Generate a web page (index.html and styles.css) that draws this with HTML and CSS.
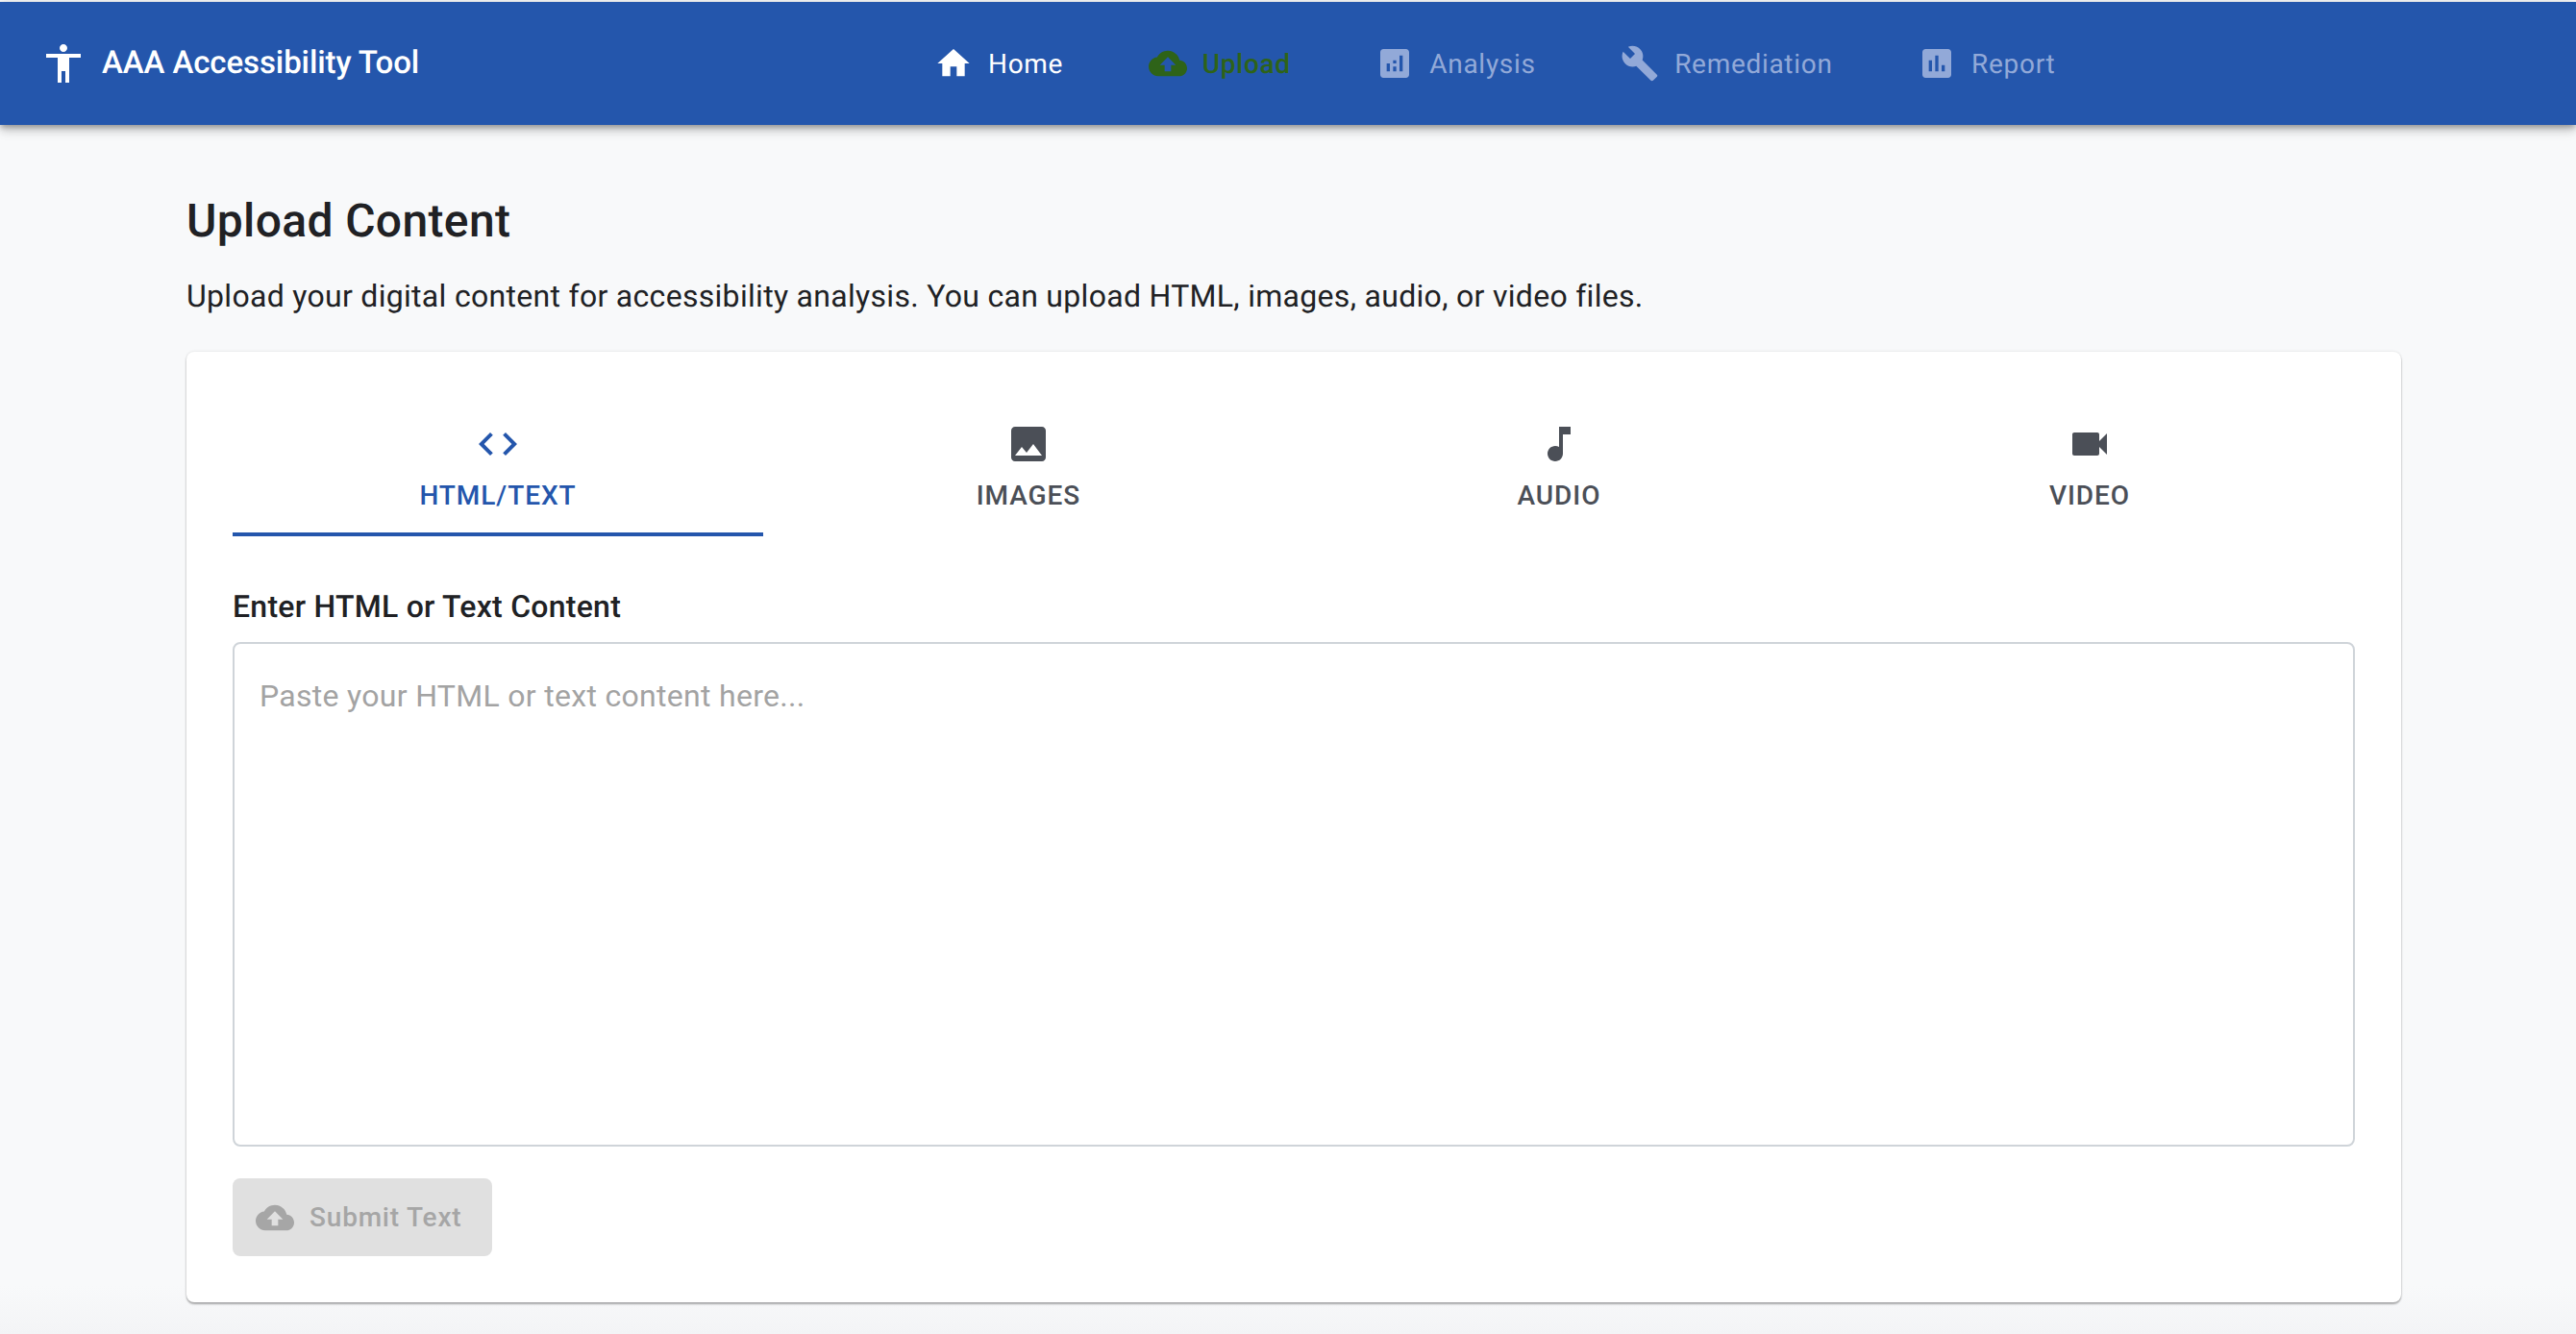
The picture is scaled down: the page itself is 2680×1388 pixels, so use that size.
FILE: index.html
```html
<!DOCTYPE html>
<html lang="en">
<head>
<meta charset="utf-8">
<title>AAA Accessibility Tool</title>
<link rel="stylesheet" href="styles.css">
</head>
<body>
<header class="appbar">
  <div class="brand">
    <svg class="icon-lg" viewBox="0 0 24 24"><path d="M12 2c1.1 0 2 .9 2 2s-.9 2-2 2-2-.9-2-2 .9-2 2-2zm9 7h-6v13h-2v-6h-2v6H9V9H3V7h18v2z"/></svg>
    <span class="brand-name">AAA Accessibility Tool</span>
  </div>
  <nav class="nav">
    <a class="nav-item nav-home"><svg class="icon" viewBox="0 0 24 24"><path d="M10 20v-6h4v6h5v-8h3L12 3 2 12h3v8z"/></svg><span>Home</span></a>
    <a class="nav-item nav-active"><svg class="icon" viewBox="0 0 24 24"><path d="M19.35 10.04C18.67 6.59 15.64 4 12 4 9.11 4 6.6 5.64 5.35 8.04 2.34 8.36 0 10.91 0 14c0 3.31 2.69 6 6 6h13c2.76 0 5-2.24 5-5 0-2.64-2.05-4.78-4.65-4.96zM14 13v4h-4v-4H7l5-5 5 5h-3z"/></svg><span>Upload</span></a>
    <a class="nav-item nav-dim"><svg class="icon" viewBox="0 0 24 24"><path d="M19 3H5c-1.1 0-2 .9-2 2v14c0 1.1.9 2 2 2h14c1.1 0 2-.9 2-2V5c0-1.1-.9-2-2-2zM9 17H7v-5h2v5zm4 0h-2v-3h2v3zm0-5h-2v-2h2v2zm4 5h-2V7h2v10z"/></svg><span>Analysis</span></a>
    <a class="nav-item nav-dim"><svg class="icon" viewBox="0 0 24 24"><path d="M22.7 19l-9.1-9.1c.9-2.3.4-5-1.5-6.9-2-2-5-2.4-7.4-1.3L9 6 6 9 1.6 4.7C.4 7.1.9 10.1 2.9 12.1c1.9 1.9 4.6 2.4 6.9 1.5l9.1 9.1c.4.4 1 .4 1.4 0l2.3-2.3c.5-.4.5-1.1.1-1.4z"/></svg><span>Remediation</span></a>
    <a class="nav-item nav-dim"><svg class="icon" viewBox="0 0 24 24"><path d="M19 3H5c-1.1 0-2 .9-2 2v14c0 1.1.9 2 2 2h14c1.1 0 2-.9 2-2V5c0-1.1-.9-2-2-2zM9 17H7v-7h2v7zm4 0h-2V7h2v10zm4 0h-2v-4h2v4z"/></svg><span>Report</span></a>
  </nav>
</header>
<main class="page">
  <h1 class="title">Upload Content</h1>
  <p class="intro">Upload your digital content for accessibility analysis. You can upload HTML, images, audio, or video files.</p>
  <section class="card">
    <div class="tabs">
      <button class="tab tab-active"><svg class="icon-lg" viewBox="0 0 24 24"><path d="M9.4 16.6L4.8 12l4.6-4.6L8 6l-6 6 6 6 1.4-1.4zm5.2 0l4.6-4.6-4.6-4.6L16 6l6 6-6 6-1.4-1.4z"/></svg><span>HTML/TEXT</span></button>
      <button class="tab"><svg class="icon-lg" viewBox="0 0 24 24"><path d="M21 19V5c0-1.1-.9-2-2-2H5c-1.1 0-2 .9-2 2v14c0 1.1.9 2 2 2h14c1.1 0 2-.9 2-2zM8.5 13.5l2.5 3.01L14.5 12l4.5 6H5l3.5-4.5z"/></svg><span>IMAGES</span></button>
      <button class="tab"><svg class="icon-lg" viewBox="0 0 24 24"><path d="M12 3v10.55c-.59-.34-1.27-.55-2-.55-2.21 0-4 1.79-4 4s1.79 4 4 4 4-1.79 4-4V7h4V3h-6z"/></svg><span>AUDIO</span></button>
      <button class="tab"><svg class="icon-lg" viewBox="0 0 24 24"><path d="M17 10.5V7c0-.55-.45-1-1-1H4c-.55 0-1 .45-1 1v10c0 .55.45 1 1 1h12c.55 0 1-.45 1-1v-3.5l4 4v-11l-4 4z"/></svg><span>VIDEO</span></button>
    </div>
    <label class="field-label" for="content">Enter HTML or Text Content</label>
    <textarea class="field" id="content" placeholder="Paste your HTML or text content here..."></textarea>
    <button class="submit" disabled><svg class="icon" viewBox="0 0 24 24"><path d="M19.35 10.04C18.67 6.59 15.64 4 12 4 9.11 4 6.6 5.64 5.35 8.04 2.34 8.36 0 10.91 0 14c0 3.31 2.69 6 6 6h13c2.76 0 5-2.24 5-5 0-2.64-2.05-4.78-4.65-4.96zM14 13v4h-4v-4H7l5-5 5 5h-3z"/></svg><span>Submit Text</span></button>
  </section>
</main>
</body>
</html>
```
FILE: styles.css
```css
* { box-sizing: border-box; }
html, body { height: 100%; }
body {
  margin: 0;
  padding-top: 2px;
  background: linear-gradient(to top, #f3f4f6, #f8f9fa 50px);
  font-family: Roboto, "Liberation Sans", sans-serif;
  text-rendering: geometricPrecision;
  overflow: hidden;
}
.icon { width: 40px; height: 40px; fill: currentColor; flex: none; }
.icon-lg { width: 48px; height: 48px; fill: currentColor; flex: none; display: block; }

.appbar {
  height: 128px;
  background: #2456ac;
  color: #fff;
  display: flex;
  align-items: center;
  padding-left: 42px;
  box-shadow: 0 3px 6px -1px rgba(0, 0, 0, .3), 0 6px 10px rgba(0, 0, 0, .14), 0 2px 16px rgba(0, 0, 0, .1);
  position: relative;
}
.brand { display: flex; align-items: center; gap: 16px; width: 930px; flex: none; }
.brand-name { font-size: 33px; font-weight: 500; padding-bottom: 1px; letter-spacing: -.1px; }
.nav { display: flex; align-items: center; gap: 88.5px; }
.nav-item { display: flex; align-items: center; gap: 16px; font-size: 28px; letter-spacing: .7px; }
.nav-home { color: #fff; }
.nav-active { color: #2e6318; font-weight: 500; }
.nav-dim { color: #92a9d8; }

.page { margin-left: 194px; width: 2304px; }
.title { margin: 0; padding-top: 68px; font-size: 48px; font-weight: 500; line-height: 64px; color: #202124; letter-spacing: .35px; }
.intro { margin: 22px 0 0; font-size: 32px; line-height: 48px; color: #202124; letter-spacing: .3px; }
.card {
  margin-top: 34px;
  background: #fff;
  border-radius: 8px;
  padding: 48px;
  height: 989px;
  box-shadow: 0 2px 2px rgba(0, 0, 0, .3), 0 0 3px rgba(0, 0, 0, .12);
  display: flex;
  flex-direction: column;
}
.tabs { display: grid; grid-template-columns: repeat(4, 1fr); }
.tab {
  height: 144px;
  padding: 24px 0 0;
  border: 0;
  border-bottom: 4px solid transparent;
  background: none;
  color: #4b4f57;
  font: 500 28px Roboto, sans-serif;
  letter-spacing: .95px;
  display: flex;
  flex-direction: column;
  align-items: center;
  gap: 13px;
}
.tab-active { color: #2456ac; border-bottom-color: #2456ac; }
.field-label { margin-top: 53px; font-size: 32px; font-weight: 500; line-height: 40px; color: #202124; letter-spacing: .25px; }
.field {
  margin-top: 17px;
  height: 525px;
  padding: 34px 26px;
  border: 2px solid #cfd4d9;
  border-radius: 8px;
  background: #fff;
  font: 400 32px/40px Roboto, sans-serif;
  letter-spacing: .3px;
  resize: none;
  outline: none;
}
.field::placeholder { color: #a3a3a3; opacity: 1; }
.submit {
  margin-top: 33px;
  height: 81px;
  width: 270px;
  padding: 0 0 0 24px;
  border: 0;
  border-radius: 8px;
  background: #e0e0e0;
  color: #a6a6a6;
  font: 500 28px Roboto, sans-serif;
  letter-spacing: .8px;
  display: flex;
  align-items: center;
  gap: 16px;
}
```
